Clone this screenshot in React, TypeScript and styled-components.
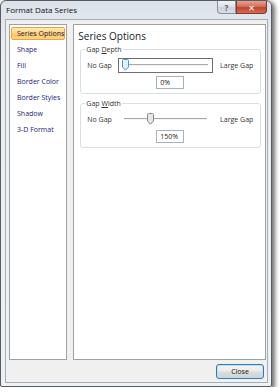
import React from "react";
import styled, { createGlobalStyle } from "styled-components";

const Global = createGlobalStyle`
  html, body { margin: 0; padding: 0; background: #ffffff; }
  body { font-family: "Open Sans", "Noto Sans", "DejaVu Sans", sans-serif; }
  * { box-sizing: border-box; }
`;

const Window = styled.div`
  width: 272px;
  height: 387px;
  border: 1px solid #575c63;
  border-radius: 6px 6px 2px 2px;
  background: linear-gradient(#dbe2ea, #e8ecf1 40px, #eef1f4);
  box-shadow: 2px 2px 4px 1px rgba(0, 0, 0, 0.55);
  padding: 0 3px 3px 4px;
  display: flex;
  flex-direction: column;
`;

const TitleBar = styled.div`
  height: 18px;
  display: flex;
  align-items: flex-start;
`;

const Title = styled.div`
  font-size: 8px;
  line-height: 18px;
  color: #111;
  padding-left: 1px;
  flex: 1;
`;

const CaptionButton = styled.div<{ $close?: boolean }>`
  height: 13px;
  width: ${(p) => (p.$close ? "31px" : "19px")};
  border: 1px solid ${(p) => (p.$close ? "#7d3a33" : "#8a9098")};
  border-top: none;
  border-radius: ${(p) => (p.$close ? "0 0 4px 0" : "0 0 0 4px")};
  background: ${(p) =>
    p.$close
      ? "linear-gradient(#e8a08f, #d2705c 45%, #c0432e 55%, #d76b4f)"
      : "linear-gradient(#eef1f4, #dfe4ea 45%, #cbd2da 55%, #d8dee5)"};
  display: flex;
  align-items: center;
  justify-content: center;
  font-size: 8px;
  font-weight: bold;
  color: ${(p) => (p.$close ? "#fff" : "#55595f")};
  margin-right: ${(p) => (p.$close ? "1px" : "0")};
`;

const Client = styled.div`
  flex: 1;
  border: 1px solid #a7adb5;
  background: #f0f0f0;
  padding: 4px 1px 3px 3px;
  display: flex;
  flex-direction: column;
`;

const Body = styled.div`
  height: 336px;
  display: flex;
  gap: 6px;
`;

const ListPanel = styled.div`
  width: 61px;
  border: 1px solid #a0a0a0;
  background: #fff;
  padding: 2px 1px;
`;

const ListItem = styled.div<{ $selected?: boolean }>`
  height: 13px;
  margin-bottom: 3px;
  font-size: 7px;
  line-height: ${(p) => (p.$selected ? "11px" : "13px")};
  white-space: nowrap;
  color: ${(p) => (p.$selected ? "#1a1a4a" : "#23237a")};
  padding-left: ${(p) => (p.$selected ? "5px" : "6px")};
  border: ${(p) => (p.$selected ? "1px solid #e7a244" : "none")};
  border-radius: 2px;
  background: ${(p) =>
    p.$selected
      ? "linear-gradient(#ffeab0, #ffd889 45%, #ffc45e 55%, #ffd58a)"
      : "transparent"};
`;

const ContentPanel = styled.div`
  flex: 1;
  border: 1px solid #a0a0a0;
  background: #fff;
  padding: 4px 4px 0 3px;
`;

const Heading = styled.div`
  font-size: 10px;
  line-height: 14px;
  color: #222;
  padding-left: 1px;
`;

const Group = styled.fieldset<{ $first?: boolean }>`
  margin: ${(p) => (p.$first ? "2px" : "5px")} 0 0 3px;
  width: 181px;
  border: 1px solid #d7dfe6;
  border-radius: 3px;
  padding: 4px 7px 4px 6px;
`;

const Legend = styled.legend`
  font-size: 7px;
  line-height: 9px;
  color: #333;
  padding: 0 1px;
  margin-left: -2px;
  u { text-decoration: underline; }
`;

const Row = styled.div`
  display: grid;
  grid-template-columns: 31px 95px 1fr;
  align-items: center;
  height: 15px;
`;

const EndLabel = styled.span<{ $right?: boolean }>`
  font-size: 7px;
  color: #333;
  white-space: nowrap;
  text-align: ${(p) => (p.$right ? "right" : "left")};
`;

const SliderBox = styled.div<{ $focused?: boolean }>`
  position: relative;
  height: 15px;
  border: 1px solid ${(p) => (p.$focused ? "#6e6e6e" : "transparent")};
  margin: ${(p) => (p.$focused ? "0" : "0 5px")};
`;

const Track = styled.div<{ $focused?: boolean }>`
  position: absolute;
  left: ${(p) => (p.$focused ? "3px" : "0")};
  right: ${(p) => (p.$focused ? "4px" : "0")};
  top: 5px;
  height: 2px;
  border-top: 1px solid #a9a9a9;
  border-bottom: 1px solid #f4f4f4;
`;

const Thumb = styled.svg`
  position: absolute;
  top: 0px;
`;

const ValueBox = styled.div`
  width: 28px;
  height: 13px;
  margin: 3px auto 0;
  border: 1px solid #a9b1ba;
  background: #fff;
  font-size: 7px;
  line-height: 11px;
  padding-left: 3px;
  color: #222;
`;

const Footer = styled.div`
  margin-top: 4px;
  display: flex;
  justify-content: flex-end;
  padding-right: 2px;
`;

const Button = styled.div`
  width: 48px;
  height: 15px;
  border: 1px solid #3d7bad;
  border-radius: 3px;
  background: linear-gradient(#f4f4f4, #ebebeb 45%, #dcdcdc 55%, #d2d2d2);
  box-shadow: inset 0 0 0 1px #aee2f5;
  font-size: 7px;
  line-height: 13px;
  text-align: center;
  color: #111;
`;

const BlueThumb = ({ left }: { left: number }) => (
  <Thumb width="7" height="12" viewBox="0 0 7 12" style={{ left }}>
    <path
      d="M1.5 0.5 H5.5 A1 1 0 0 1 6.5 1.5 V8 L3.5 11.2 L0.5 8 V1.5 A1 1 0 0 1 1.5 0.5 Z"
      fill="#dff1fb"
      stroke="#3d9bd1"
      strokeWidth="1"
    />
  </Thumb>
);

const GrayThumb = ({ left }: { left: number }) => (
  <Thumb width="7" height="12" viewBox="0 0 7 12" style={{ left, top: 0 }}>
    <path
      d="M1.5 0.5 H5.5 A1 1 0 0 1 6.5 1.5 V8 L3.5 11.2 L0.5 8 V1.5 A1 1 0 0 1 1.5 0.5 Z"
      fill="#e6e6e6"
      stroke="#8a8a8a"
      strokeWidth="1"
    />
  </Thumb>
);

const items = ["Series Options", "Shape", "Fill", "Border Color", "Border Styles", "Shadow", "3-D Format"];

export default function App() {
  return (
    <>
      <Global />
      <Window>
        <TitleBar>
          <Title>Format Data Series</Title>
          <CaptionButton>?</CaptionButton>
          <CaptionButton $close>✕</CaptionButton>
        </TitleBar>
        <Client>
          <Body>
            <ListPanel>
              {items.map((t, i) => (
                <ListItem key={t} $selected={i === 0}>
                  {t}
                </ListItem>
              ))}
            </ListPanel>
            <ContentPanel>
              <Heading>Series Options</Heading>
              <Group $first>
                <Legend>
                  Gap <u>D</u>epth
                </Legend>
                <Row>
                  <EndLabel>No Gap</EndLabel>
                  <SliderBox $focused>
                    <Track $focused />
                    <BlueThumb left={3} />
                  </SliderBox>
                  <EndLabel $right>Large Gap</EndLabel>
                </Row>
                <ValueBox>0%</ValueBox>
              </Group>
              <Group>
                <Legend>
                  Gap <u>W</u>idth
                </Legend>
                <Row>
                  <EndLabel>No Gap</EndLabel>
                  <SliderBox>
                    <Track />
                    <GrayThumb left={23} />
                  </SliderBox>
                  <EndLabel $right>Large Gap</EndLabel>
                </Row>
                <ValueBox>150%</ValueBox>
              </Group>
            </ContentPanel>
          </Body>
          <Footer>
            <Button>Close</Button>
          </Footer>
        </Client>
      </Window>
    </>
  );
}
